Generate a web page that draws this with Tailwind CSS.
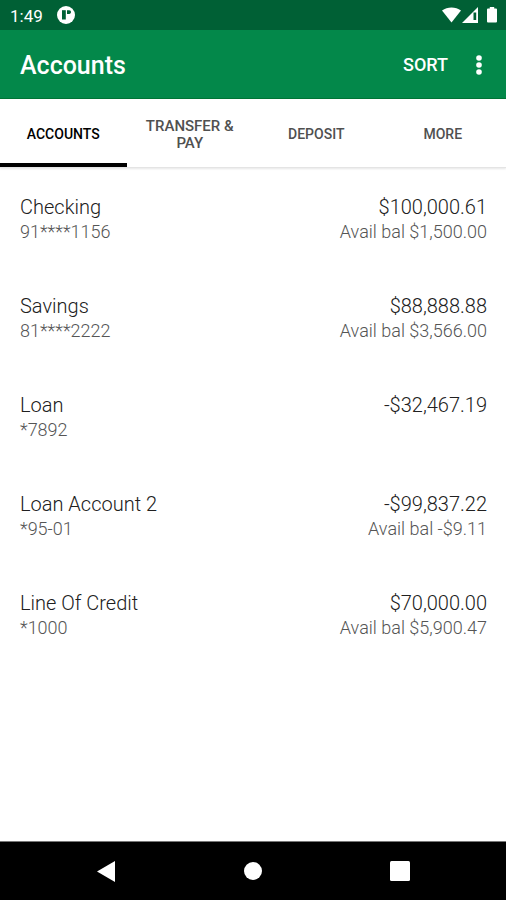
<!DOCTYPE html>
<html lang="en">
<head>
<meta charset="utf-8">
<meta name="viewport" content="width=device-width, initial-scale=1">
<title>Accounts</title>
<script src="https://cdn.jsdelivr.net/npm/@tailwindcss/browser@4"></script>
</head>
<body class="flex min-h-screen flex-col bg-white font-['Roboto',sans-serif] text-[#242424]">
  <!-- Status bar -->
  <div class="flex h-[30px] items-center justify-between bg-[#006035] pr-2 pl-[10px] text-white">
    <div class="flex items-center gap-[14px]">
      <span class="pt-px text-[17px] leading-5">1:49</span>
      <svg class="size-[18px]" viewBox="0 0 18 18" aria-hidden="true"><circle cx="9" cy="9" r="9" fill="#fff"/><path d="M5 4.200h3.800v9.300H5z" fill="#006035"/><path d="M10 4.200h2.200c1.200 0 1.800.8 1.800 1.900s-.6 1.900-1.800 1.900H10z" fill="#006035"/></svg>
    </div>
    <svg class="h-4 w-[56px]" viewBox="0 0 56 16" aria-hidden="true" fill="#fff"><path d="M0 3.500C5.500-.5 13.500-.5 19 3.500L9.500 15.500z"/><path d="M36 0v16H20z"/><path d="M31.500 5.500h2.700v7.500h-2.700z" fill="#006035"/><path d="M46 1.500h1.800V0h4.400v1.500H54q1 0 1 1v12q0 1-1 1h-8q-1 0-1-1v-12q0-1 1-1z"/></svg>
  </div>

  <!-- App bar -->
  <header class="flex h-[69px] items-center justify-between border-b border-[#007536] bg-[#03884a] pt-0.5 pr-4 pl-5 text-white">
    <h1 class="pt-0.5 text-[25px] leading-8 font-medium">Accounts</h1>
    <div class="flex items-center gap-4">
      <button type="button" class="px-1 text-[18px] leading-6 font-medium">SORT</button>
      <button type="button" aria-label="More options" class="flex w-[22px] justify-center"><svg class="h-5 w-[6px]" viewBox="0 0 6 20" fill="#fff"><circle cx="3" cy="3" r="2.800"/><circle cx="3" cy="10" r="2.800"/><circle cx="3" cy="17" r="2.800"/></svg></button>
    </div>
  </header>

  <!-- Tabs -->
  <nav class="grid h-[69px] grid-cols-4 border-b border-[#e4e4e4] text-center text-[14px] leading-[17px] font-medium text-[#505050] shadow-[0_1px_2px_#0000001a]">
    <a href="#accounts" aria-current="page" class="flex items-center justify-center border-b-4 border-black pt-1.5 text-black">ACCOUNTS</a>
    <a href="#transfer" class="flex items-center justify-center px-4 pt-1 text-[15px] leading-[17px]">TRANSFER &amp; PAY</a>
    <a href="#deposit" class="flex items-center justify-center pt-0.5">DEPOSIT</a>
    <a href="#more" class="flex items-center justify-center pt-0.5">MORE</a>
  </nav>

  <!-- Account list -->
  <main class="flex-1">
    <ul class="pr-[19px] pl-5 text-[18px] leading-6 font-light text-[#555]">
      <li class="flex h-[99px] justify-between pt-[26px]">
        <div><h2 class="text-[20px] leading-[26px] text-[#202020]">Checking</h2><p>91****1156</p></div>
        <div class="text-right"><p class="text-[20px] leading-[26px] text-[#202020]">$100,000.61</p><p>Avail bal $1,500.00</p></div>
      </li>
      <li class="flex h-[99px] justify-between pt-[26px]">
        <div><h2 class="text-[20px] leading-[26px] text-[#202020]">Savings</h2><p>81****2222</p></div>
        <div class="text-right"><p class="text-[20px] leading-[26px] text-[#202020]">$88,888.88</p><p>Avail bal $3,566.00</p></div>
      </li>
      <li class="flex h-[99px] justify-between pt-[26px]">
        <div><h2 class="text-[20px] leading-[26px] text-[#202020]">Loan</h2><p>*7892</p></div>
        <div class="text-right"><p class="text-[20px] leading-[26px] text-[#202020]">-$32,467.19</p></div>
      </li>
      <li class="flex h-[99px] justify-between pt-[26px]">
        <div><h2 class="text-[20px] leading-[26px] text-[#202020]">Loan Account 2</h2><p>*95-01</p></div>
        <div class="text-right"><p class="text-[20px] leading-[26px] text-[#202020]">-$99,837.22</p><p>Avail bal -$9.11</p></div>
      </li>
      <li class="flex h-[99px] justify-between pt-[26px]">
        <div><h2 class="text-[20px] leading-[26px] text-[#202020]">Line Of Credit</h2><p>*1000</p></div>
        <div class="text-right"><p class="text-[20px] leading-[26px] text-[#202020]">$70,000.00</p><p>Avail bal $5,900.47</p></div>
      </li>
    </ul>
  </main>

  <!-- System navigation -->
  <footer class="flex h-[59px] items-center justify-between border-t border-[#777] bg-black pr-24 pl-[97px]">
    <button type="button" aria-label="Back"><svg class="h-[21px] w-[18px]" viewBox="0 0 18 21" fill="#fff"><path d="M18 0v21L0 10.500z"/></svg></button>
    <button type="button" aria-label="Home"><svg class="size-[18px]" viewBox="0 0 18 18" fill="#fff"><circle cx="9" cy="9" r="9"/></svg></button>
    <button type="button" aria-label="Recent apps"><svg class="size-5" viewBox="0 0 20 20" fill="#fff"><rect width="20" height="20" rx="1.500"/></svg></button>
  </footer>
</body>
</html>
